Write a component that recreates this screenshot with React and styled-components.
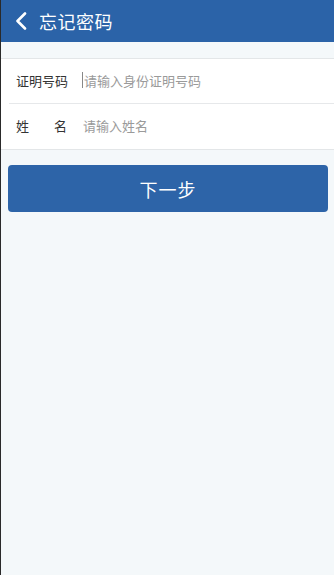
import React from "react";
import styled, { createGlobalStyle } from "styled-components";

const GlobalStyle = createGlobalStyle`
    html, body {
        margin: 0;
        padding: 0;
        background: #f4f8fa;
    }
    * { box-sizing: border-box; }
`;

const Screen = styled.div`
    width: 334px;
    height: 575px;
    background: #f4f8fa;
    border-left: 1px solid #2a2a2a;
    font-family: "Noto Sans CJK SC", "Noto Sans", sans-serif;
    overflow: hidden;
`;

const TopBar = styled.header`
    display: flex;
    align-items: center;
    height: 42px;
    background-color: #2b63a8;
    padding-left: 12px;
    color: #ffffff;
`;

const BackButton = styled.button`
    display: flex;
    align-items: center;
    justify-content: center;
    width: 16px;
    height: 24px;
    padding: 0;
    border: none;
    background: none;
    margin-right: 10px;
`;

const Title = styled.h1`
    margin: 0;
    font-size: 18px;
    font-weight: 400;
    letter-spacing: 0.5px;
`;

const Form = styled.div`
    margin-top: 16px;
    background: #ffffff;
    border-top: 1px solid #e3e6e8;
    border-bottom: 1px solid #e3e6e8;
    padding-left: 8px;
`;

const Row = styled.label`
    display: flex;
    align-items: center;
    height: ${p => p.h}px;
    padding-bottom: 2px;
    border-bottom: ${p => (p.last ? "none" : "1px solid #e6e8ea")};
`;

const Label = styled.span`
    display: flex;
    justify-content: space-between;
    width: 51px;
    margin-left: 7px;
    margin-right: 16px;
    font-size: 13px;
    color: #333333;
`;

const Input = styled.input`
    flex: 1;
    border: none;
    outline: none;
    padding: 0;
    font-family: inherit;
    font-size: 13px;
    color: #333;
    background: transparent;
    &::placeholder {
        color: #9a9a9a;
    }
`;

const Caret = styled.span`
    width: 1px;
    height: 16px;
    background: #888;
    margin-left: -1px;
    margin-right: 1px;
`;

const NextButton = styled.button`
    display: block;
    width: 320px;
    height: 47px;
    margin: 15px 0 0 7px;
    border: none;
    border-radius: 4px;
    background-color: #2d64a8;
    color: #ffffff;
    font-family: inherit;
    font-size: 18px;
    letter-spacing: 1px;
`;

const Back = () => (
    <svg width="12" height="18" viewBox="0 0 12 18">
        <path d="M10 1.5L2.5 9L10 16.5" fill="none" stroke="#ffffff" strokeWidth="2.6" strokeLinecap="round" strokeLinejoin="round" />
    </svg>
);

const App = () => (
    <>
        <GlobalStyle />
        <Screen>
            <TopBar>
                <BackButton><Back /></BackButton>
                <Title>忘记密码</Title>
            </TopBar>
            <Form>
                <Row h={45}>
                    <Label><span>证</span><span>明</span><span>号</span><span>码</span></Label>
                    <Caret />
                    <Input placeholder="请输入身份证明号码" />
                </Row>
                <Row h={45} last>
                    <Label><span>姓</span><span>名</span></Label>
                    <Input placeholder="请输入姓名" />
                </Row>
            </Form>
            <NextButton>下一步</NextButton>
        </Screen>
    </>
);

export default App;
